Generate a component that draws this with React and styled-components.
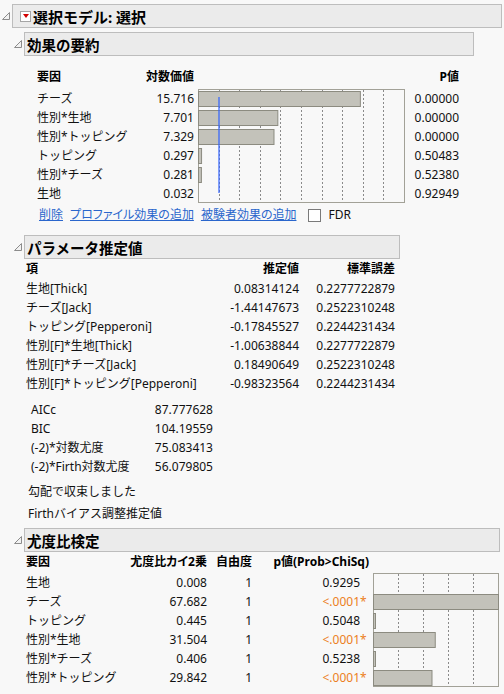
import React from 'react'
import styled, { createGlobalStyle } from 'styled-components'

const GlobalStyle = createGlobalStyle`
  body {
    margin: 0;
    background: #f8f8f8;
    font-family: "Noto Sans", "Noto Sans CJK JP", sans-serif;
    font-size: 12px;
    color: #111;
  }
`

const effects = [
  { name: 'チーズ', logworth: '15.716', v: 15.716, p: '0.00000' },
  { name: '性別*生地', logworth: '7.701', v: 7.701, p: '0.00000' },
  { name: '性別*トッピング', logworth: '7.329', v: 7.329, p: '0.00000' },
  { name: 'トッピング', logworth: '0.297', v: 0.297, p: '0.50483' },
  { name: '性別*チーズ', logworth: '0.281', v: 0.281, p: '0.52380' },
  { name: '生地', logworth: '0.032', v: 0.032, p: '0.92949' },
]

const estimates = [
  ['生地[Thick]', '0.08314124', '0.2277722879'],
  ['チーズ[Jack]', '-1.44147673', '0.2522310248'],
  ['トッピング[Pepperoni]', '-0.17845527', '0.2244231434'],
  ['性別[F]*生地[Thick]', '-1.00638844', '0.2277722879'],
  ['性別[F]*チーズ[Jack]', '0.18490649', '0.2522310248'],
  ['性別[F]*トッピング[Pepperoni]', '-0.98323564', '0.2244231434'],
]

const fitStats = [
  ['AICc', '87.777628'],
  ['BIC', '104.19559'],
  ['(-2)*対数尤度', '75.083413'],
  ['(-2)*Firth対数尤度', '56.079805'],
]

const lrTests = [
  { name: '生地', chi: '0.008', v: 0.008, p: '0.9295', sig: false },
  { name: 'チーズ', chi: '67.682', v: 67.682, p: '<.0001', sig: true },
  { name: 'トッピング', chi: '0.445', v: 0.445, p: '0.5048', sig: false },
  { name: '性別*生地', chi: '31.504', v: 31.504, p: '<.0001', sig: true },
  { name: '性別*チーズ', chi: '0.406', v: 0.406, p: '0.5238', sig: false },
  { name: '性別*トッピング', chi: '29.842', v: 29.842, p: '<.0001', sig: true },
]

// outline nodes
const Page = styled.div`
  width: 504px;
  height: 694px;
  padding-top: 4px;
  box-sizing: border-box;
  overflow: hidden;
`

const Section = styled.section`
  margin-top: ${p => p.$top || 0}px;
`

const Head = styled.div`
  display: flex;
  align-items: center;
`

const ToggleSlot = styled.span`
  width: 12px;
  display: flex;
  justify-content: center;
`

const TitleBox = styled.div`
  box-sizing: border-box;
  width: ${p => p.$w}px;
  height: 24px;
  display: flex;
  align-items: center;
  padding-left: ${p => (p.$menu ? 7 : 2)}px;
  background: #ebebeb;
  border: 1px solid #bdbdbd;
  font-size: ${p => (p.$menu ? 15 : 14.5)}px;
  font-weight: bold;
  color: #000;
  white-space: nowrap;
`

const MenuButton = styled.span`
  box-sizing: border-box;
  width: 11px;
  height: 11px;
  margin-right: 2px;
  border: 1px solid #a5a5a5;
  background: #fff;
  display: flex;
  align-items: center;
  justify-content: center;

  &::after {
    content: '';
    border-left: 3.5px solid transparent;
    border-right: 3.5px solid transparent;
    border-top: 4px solid #d30000;
  }
`

const Body = styled.div`
  padding-left: 12px;
  margin-top: ${p => p.$top || 0}px;
`

function Disclosure() {
  return (
    <svg width="8" height="8" viewBox="0 0 8 8">
      <polygon points="7.5,0.5 7.5,7.5 0.5,7.5" fill="#f2f2f2" stroke="#8c8c8c" />
    </svg>
  )
}

function Outline({ title, width, menu, top, bodyTop, children }) {
  return (
    <Section $top={top}>
      <Head>
        <ToggleSlot><Disclosure /></ToggleSlot>
        <TitleBox $w={width} $menu={menu}>
          {menu && <MenuButton />}
          {title}
        </TitleBox>
      </Head>
      <Body $top={bodyTop}>{children}</Body>
    </Section>
  )
}

// tables
const Grid = styled.div`
  display: grid;
  grid-template-columns: ${p => p.$cols};
  grid-template-rows: ${p => p.$rows};
  margin-top: ${p => p.$top || 0}px;
  padding-left: ${p => p.$left || 0}px;
`

const Cell = styled.div`
  line-height: ${p => (p.$head ? 20 : 19)}px;
  font-weight: ${p => (p.$head ? 'bold' : 'normal')};
  color: ${p => (p.$head ? '#000' : '#111')};
  justify-self: ${p => (p.$align === 'right' ? 'end' : 'start')};
  white-space: nowrap;
  font-feature-settings: ${p => (p.$head ? '"palt"' : 'normal')};
`

const ChartCell = styled.div`
  grid-column: ${p => p.$col};
  grid-row: 2 / span 6;
  padding-left: 4px;
`

const PCell = styled.div`
  display: flex;
  justify-content: flex-end;
  line-height: 19px;
  white-space: nowrap;
  color: ${p => (p.$sig ? '#ec7f22' : '#111')};
`

const Star = styled.span`
  width: 9px;
  text-align: left;
`

function BarChart({ width, ticks, bars, children }) {
  const height = 114
  return (
    <svg width={width} height={height} style={{ display: 'block' }}>
      <rect x="0.5" y="0.5" width={width - 1} height={height - 1} fill="#f8f8f8" stroke="#a2a197" />
      {ticks.map(x => (
        <line key={x} x1={x + 0.5} x2={x + 0.5} y1="1" y2={height - 1} stroke="#8a8a8a" strokeDasharray="2 2" />
      ))}
      {bars.map((w, i) =>
        w > 0 ? (
          <rect key={i} x="0.5" y={i * 19 + 2.5} width={w} height="15" fill="#c3c2ba" stroke="#8c8b80" />
        ) : null
      )}
      {children}
    </svg>
  )
}

// links row under effect summary
const LinkRow = styled.div`
  display: flex;
  align-items: center;
  gap: 7px;
  margin-top: 2px;
  padding-left: 15px;
  line-height: 20px;
`

const Link = styled.a`
  color: #2a66cc;
  text-decoration: underline;
  font-feature-settings: "palt";
  cursor: pointer;
`

const Check = styled.span`
  box-sizing: border-box;
  width: 13px;
  height: 13px;
  margin-left: 5px;
  border: 1px solid #7a7a7a;
  background: #fff;
`

const Note = styled.div`
  line-height: 22px;
  padding-left: 4px;
`

const Notes = styled.div`
  margin-top: 5px;
`

export default function App() {
  const effTicks = [1, 2, 3, 4, 5, 6, 7, 8, 9].map(k => Math.round(k * 20.6))
  const effBars = effects.map(e => (e.v * 10.3 >= 1 ? Math.max(e.v * 10.3, 2) : 0))
  const lrTicks = [1, 2, 3, 4].map(k => Math.round(k * 25.1))
  const lrBars = lrTests.map(t => (t.v > 0.1 ? Math.min(Math.max(t.v * 1.96, 2), 125) : 0))

  return (
    <Page>
      <GlobalStyle />
      <Outline title="選択モデル: 選択" width={490} menu bodyTop={4}>
        <Outline title="効果の要約" width={450}>
          <Grid $cols="103px 54px 211px 54px" $rows="22px repeat(6, 19px)" $top={11} $left={13}>
            <Cell $head>要因</Cell>
            <Cell $head $align="right">対数価値</Cell>
            <Cell $head />
            <Cell $head $align="right">P値</Cell>
            {effects.map((e, i) => (
              <React.Fragment key={e.name}>
                <Cell style={{ gridRow: i + 2, gridColumn: 1 }}>{e.name}</Cell>
                <Cell style={{ gridRow: i + 2, gridColumn: 2 }} $align="right">{e.logworth}</Cell>
                <Cell style={{ gridRow: i + 2, gridColumn: 4 }} $align="right">{e.p}</Cell>
              </React.Fragment>
            ))}
            <ChartCell $col={3}>
              <BarChart width={207} ticks={effTicks} bars={effBars}>
                <line x1="21" x2="21" y1="8" y2="104" stroke="#2f62ff" strokeWidth="1.2" />
              </BarChart>
            </ChartCell>
          </Grid>
          <LinkRow>
            <Link>削除</Link>
            <Link>プロファイル効果の追加</Link>
            <Link>被験者効果の追加</Link>
            <Check />
            <span>FDR</span>
          </LinkRow>
        </Outline>

        <Outline title="パラメータ推定値" width={376} top={10}>
          <Grid $cols="194px 79px 96px" $rows="20px repeat(6, 19px)" $left={2}>
            <Cell $head>項</Cell>
            <Cell $head $align="right">推定値</Cell>
            <Cell $head $align="right">標準誤差</Cell>
            {estimates.map(([term, est, se]) => (
              <React.Fragment key={term}>
                <Cell>{term}</Cell>
                <Cell $align="right">{est}</Cell>
                <Cell $align="right">{se}</Cell>
              </React.Fragment>
            ))}
          </Grid>
          <Grid $cols="119px 63px" $rows="repeat(4, 19px)" $top={7} $left={7}>
            {fitStats.map(([label, val]) => (
              <React.Fragment key={label}>
                <Cell>{label}</Cell>
                <Cell $align="right">{val}</Cell>
              </React.Fragment>
            ))}
          </Grid>
          <Notes>
            <Note>勾配で収束しました</Note>
            <Note>Firthバイアス調整推定値</Note>
          </Notes>
        </Outline>

        <Outline title="尤度比検定" width={476} top={3}>
          <Grid $cols="124px 57px 45px 117px 130px" $rows="21px repeat(6, 19px)" $left={2}>
            <Cell $head>要因</Cell>
            <Cell $head $align="right">尤度比カイ2乗</Cell>
            <Cell $head $align="right">自由度</Cell>
            <Cell $head $align="right">p値(Prob&gt;ChiSq)</Cell>
            <Cell $head />
            {lrTests.map((t, i) => (
              <React.Fragment key={t.name}>
                <Cell style={{ gridRow: i + 2, gridColumn: 1 }}>{t.name}</Cell>
                <Cell style={{ gridRow: i + 2, gridColumn: 2 }} $align="right">{t.chi}</Cell>
                <Cell style={{ gridRow: i + 2, gridColumn: 3 }} $align="right">1</Cell>
                <PCell style={{ gridRow: i + 2, gridColumn: 4 }} $sig={t.sig}>
                  <span>{t.p}</span>
                  <Star>{t.sig ? '*' : ''}</Star>
                </PCell>
              </React.Fragment>
            ))}
            <ChartCell $col={5}>
              <BarChart width={126} ticks={lrTicks} bars={lrBars} />
            </ChartCell>
          </Grid>
        </Outline>
      </Outline>
    </Page>
  )
}
